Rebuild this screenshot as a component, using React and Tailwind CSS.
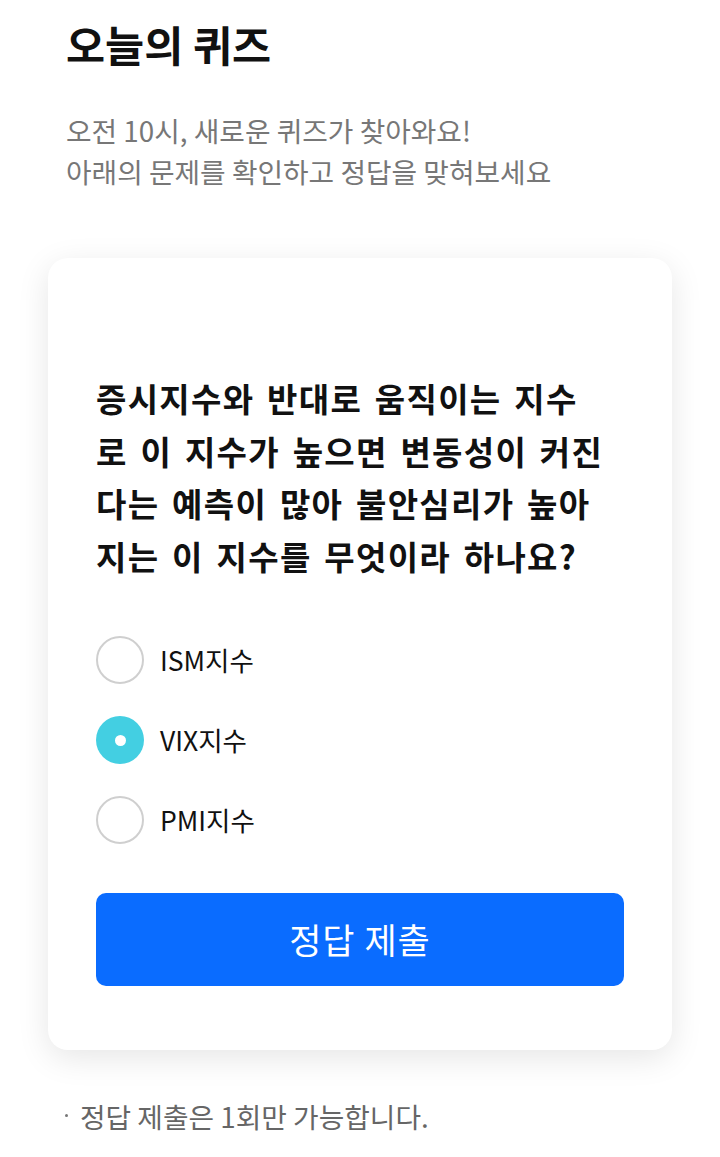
import React from "react";

const font = { fontFamily: '"Noto Sans CJK KR", "Noto Sans", sans-serif' };

function Radio({ checked }) {
  if (checked) {
    return (
      <span className="flex h-[48px] w-[48px] shrink-0 items-center justify-center rounded-full bg-[#43cfe2]">
        <span className="h-[11px] w-[11px] rounded-full bg-white" />
      </span>
    );
  }
  return <span className="h-[48px] w-[48px] shrink-0 rounded-full border-2 border-[#cfcfcf] bg-white" />;
}

export default function App() {
  const options = [
    { label: "ISM지수", checked: false },
    { label: "VIX지수", checked: true },
    { label: "PMI지수", checked: false },
  ];
  return (
    <div className="min-h-[1157px] w-[720px] bg-white" style={font}>
      <div className="px-[66px] pt-[16px]">
        <h1 className="text-[42.5px] font-bold leading-[56px] text-[#111]">오늘의 퀴즈</h1>
        <p className="mt-[38px] text-[27.8px] leading-[41px] text-[#777]">
          오전 10시, 새로운 퀴즈가 찾아와요!
          <br />
          아래의 문제를 확인하고 정답을 맞혀보세요
        </p>
      </div>
      <div className="mx-[48px] mt-[66px] rounded-[20px] bg-white px-[48px] pb-[64px] pt-[114px] shadow-[0_8px_32px_rgba(0,0,0,0.1)]">
        <p className="w-[512px] text-[33px] font-bold leading-[52.5px] tracking-[1.3px] text-[#111] [word-spacing:4px]">
          증시지수와 반대로 움직이는 지수로 이 지수가 높으면 변동성이 커진다는 예측이 많아 불안심리가 높아지는 이 지수를 무엇이라 하나요?
        </p>
        <div className="mt-[54px] flex flex-col gap-[32px]">
          {options.map((o) => (
            <div key={o.label} className="flex items-center gap-[16px]">
              <Radio checked={o.checked} />
              <span className="text-[26.5px] leading-[48px] text-[#111]">{o.label}</span>
            </div>
          ))}
        </div>
        <button className="mt-[49px] flex h-[93px] w-full items-center justify-center rounded-[10px] bg-[#0a6cff] text-[35px] tracking-[1px] text-white">
          정답 제출
        </button>
      </div>
      <div className="mt-[46px] flex items-center gap-[12px] pl-[65px] text-[27.8px] leading-[40px] text-[#666]">
        <span className="mb-[2px] h-[3px] w-[3px] shrink-0 rounded-full bg-[#777]" />
        <span>정답 제출은 1회만 가능합니다.</span>
      </div>
    </div>
  );
}
